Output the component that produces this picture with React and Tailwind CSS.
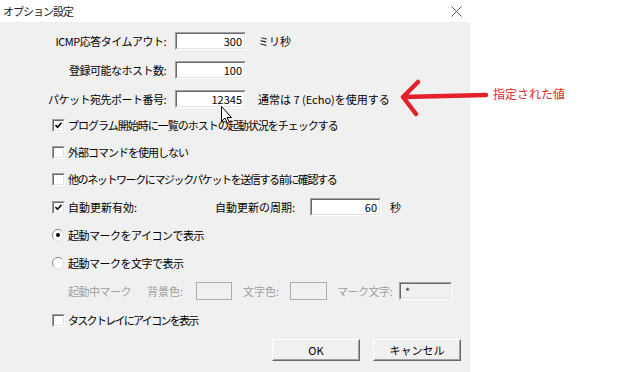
import React from 'react';

const Sunken = ({ className = '', children }) => (
  <div className={`border border-t-[#a0a0a0] border-l-[#a0a0a0] border-b-white border-r-white ${className}`}>
    <div className="h-full w-full border border-t-[#696969] border-l-[#696969] border-b-[#e3e3e3] border-r-[#e3e3e3] bg-white flex items-center justify-end pr-[2px] leading-none">
      {children}
    </div>
  </div>
);

const CheckBox = ({ checked }) => (
  <span className="w-[13px] h-[13px] shrink-0 border border-t-[#a0a0a0] border-l-[#a0a0a0] border-b-white border-r-white">
    <span className="block w-full h-full border border-t-[#696969] border-l-[#696969] border-b-[#e3e3e3] border-r-[#e3e3e3] bg-white">
      {checked && (
        <svg width="9" height="9" viewBox="0 0 9 9" className="block">
          <path d="M1.5 4 L3.5 6.2 L7.5 1.8" fill="none" stroke="#000" strokeWidth="1.6" />
        </svg>
      )}
    </span>
  </span>
);

const Radio = ({ checked }) => (
  <svg width="12" height="12" viewBox="0 0 12 12" className="shrink-0">
    <circle cx="6" cy="6" r="5.5" fill="#fff" />
    <path d="M2.1 9.9 A5.5 5.5 0 0 1 9.9 2.1" fill="none" stroke="#8a8a8a" strokeWidth="1" />
    <path d="M9.9 2.1 A5.5 5.5 0 0 1 2.1 9.9" fill="none" stroke="#e3e3e3" strokeWidth="1" />
    {checked && <circle cx="6" cy="6" r="2" fill="#000" />}
  </svg>
);

const Button = ({ children }) => (
  <div className="w-[88px] h-[22px] border border-t-white border-l-white border-b-[#696969] border-r-[#696969]">
    <div className="w-full h-full border border-t-[#f0f0f0] border-l-[#f0f0f0] border-b-[#a0a0a0] border-r-[#a0a0a0] bg-[#f0f0f0] flex items-center justify-center text-[11px] leading-none">
      {children}
    </div>
  </div>
);

export default function App() {
  return (
    <div className="relative w-[621px] h-[372px] overflow-hidden bg-white text-black text-[11px] font-['Noto_Sans_CJK_JP',sans-serif]">
      <div className="w-[470px] h-full flex flex-col">
        {/* title bar */}
        <div className="h-[22px] shrink-0 bg-white flex items-center justify-between pl-[3px] pr-[8px]">
          <span className="text-[11px] tracking-[-1px] text-[#222] leading-none">オプション設定</span>
          <svg width="11" height="11" viewBox="0 0 11 11">
            <path d="M0.5 0.5 L10.5 10.5 M10.5 0.5 L0.5 10.5" stroke="#555" strokeWidth="1" />
          </svg>
        </div>

        <div className="flex-1 bg-[#f0f0f0] pt-[10px] flex flex-col">
          {/* numeric settings */}
          <div className="h-[18px] flex items-center">
            <span className="w-[166px] text-right leading-none tracking-[-0.5px]">ICMP応答タイムアウト:</span>
            <Sunken className="ml-[9px] w-[71px] h-[18px]">300</Sunken>
            <span className="ml-[12px] leading-none">ミリ秒</span>
          </div>
          <div className="mt-[11px] h-[18px] flex items-center">
            <span className="w-[166px] text-right leading-none tracking-[-0.5px]">登録可能なホスト数:</span>
            <Sunken className="ml-[9px] w-[71px] h-[18px]">100</Sunken>
          </div>
          <div className="mt-[11px] h-[18px] flex items-center">
            <span className="w-[166px] text-right leading-none tracking-[-0.5px]">パケット宛先ポート番号:</span>
            <Sunken className="ml-[9px] w-[71px] h-[18px]">12345</Sunken>
            <span className="ml-[12px] leading-none">通常は 7 (Echo)を使用する</span>
          </div>

          {/* checkboxes */}
          <div className="mt-[8px] h-[18px] flex items-center pl-[52px] gap-[3px]">
            <CheckBox checked />
            <span className="leading-none tracking-[-1px]">プログラム開始時に一覧のホストの起動状況をチェックする</span>
          </div>
          <div className="mt-[9px] h-[18px] flex items-center pl-[52px] gap-[3px]">
            <CheckBox />
            <span className="leading-none tracking-[-1px]">外部コマンドを使用しない</span>
          </div>
          <div className="mt-[9px] h-[18px] flex items-center pl-[52px] gap-[3px]">
            <CheckBox />
            <span className="leading-none tracking-[-1.4px]">他のネットワークにマジックパケットを送信する前に確認する</span>
          </div>
          <div className="mt-[10px] h-[18px] flex items-center pl-[52px]">
            <CheckBox checked />
            <span className="ml-[3px] w-[147px] leading-none">自動更新有効:</span>
            <span className="w-[95px] leading-none">自動更新の周期:</span>
            <Sunken className="w-[71px] h-[18px]">60</Sunken>
            <span className="ml-[9px] leading-none">秒</span>
          </div>

          {/* radios */}
          <div className="mt-[10px] h-[18px] flex items-center pl-[52px] gap-[4px]">
            <Radio checked />
            <span className="leading-none tracking-[-0.5px]">起動マークをアイコンで表示</span>
          </div>
          <div className="mt-[10px] h-[18px] flex items-center pl-[52px] gap-[4px]">
            <Radio />
            <span className="leading-none tracking-[-0.5px]">起動マークを文字で表示</span>
          </div>

          {/* disabled mark settings */}
          <div className="mt-[10px] h-[18px] flex items-center pl-[68px] text-[#a0a0a0]">
            <span className="w-[79px] leading-none tracking-[-0.5px]">起動中マーク</span>
            <span className="w-[49px] leading-none">背景色:</span>
            <div className="w-[36px] h-[18px] border border-[#adadad]" />
            <span className="ml-[11px] w-[47px] leading-none">文字色:</span>
            <div className="w-[37px] h-[18px] border border-[#adadad]" />
            <span className="ml-[10px] w-[62px] leading-none tracking-[-0.5px]">マーク文字:</span>
            <div className="w-[53px] h-[18px] border border-t-[#a0a0a0] border-l-[#a0a0a0] border-b-white border-r-white">
              <div className="w-full h-full border border-t-[#696969] border-l-[#696969] border-b-[#e3e3e3] border-r-[#e3e3e3] bg-[#f0f0f0] flex items-center pl-[4px] text-[#333] leading-none">*</div>
            </div>
          </div>

          <div className="mt-[11px] h-[18px] flex items-center pl-[52px] gap-[3px]">
            <CheckBox />
            <span className="leading-none tracking-[-1.7px]">タスクトレイにアイコンを表示</span>
          </div>

          {/* buttons */}
          <div className="mt-[10px] flex pl-[272px] gap-[13px]">
            <Button>OK</Button>
            <Button>キャンセル</Button>
          </div>
        </div>
      </div>

      {/* annotation */}
      <svg className="absolute left-[398px] top-[76px]" width="92" height="44" viewBox="0 0 92 44">
        <path d="M5 21 L88 19 M5 21 L20 6 M5 21 L18 38" fill="none" stroke="#e3202b" strokeWidth="4.5" strokeLinecap="round" strokeLinejoin="round" />
      </svg>
      <span className="absolute left-[493px] top-[88px] text-[12px] leading-none text-[#dc2c32]">指定された値</span>

      {/* mouse cursor */}
      <svg className="absolute left-[221px] top-[106px]" width="12" height="19" viewBox="0 0 12 19">
        <path d="M0.5 0.5 L0.5 15.5 L4 12 L6.5 17.5 L8.5 16.5 L6 11.5 L10.5 11.5 Z" fill="#fff" stroke="#000" strokeWidth="1" />
      </svg>
    </div>
  );
}
